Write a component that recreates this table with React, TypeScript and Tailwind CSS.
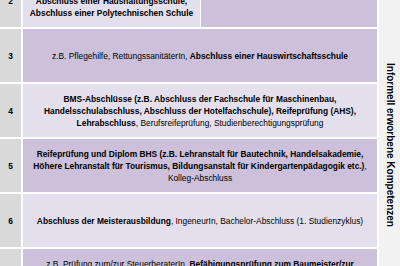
const font = { fontFamily: '"Liberation Sans", Arial, sans-serif' }

export default function App() {
  return (
    <div className="w-[400px] h-[266px] overflow-hidden bg-white" style={font}>
      <div className="flex gap-[2px] mt-[-26px] text-[8.4px] leading-[12px] text-black">
        <div className="flex flex-col gap-[2px] w-[377px]">
          <Row n="2" split>
            <span className="invisible">Abschluss der allgemeinen Schulpflicht,</span>
            <br />
            <b>Abschluss einer Haushaltungsschule,</b>
            <br />
            <b>Abschluss einer Polytechnischen Schule</b>
          </Row>
          <Row n="3" dark>
            z.B. Pflegehilfe, RettungssanitäterIn, <b>Abschluss einer Hauswirtschaftsschule</b>
          </Row>
          <Row n="4">
            <b>BMS-Abschlüsse (z.B. Abschluss der Fachschule für Maschinenbau,</b>
            <br />
            <b>Handelsschulabschluss, Abschluss der Hotelfachschule), Reifeprüfung (AHS),</b>
            <br />
            <b>Lehrabschluss</b>, Berufsreifeprüfung, Studienberechtigungsprüfung
          </Row>
          <Row n="5" dark>
            <b>Reifeprüfung und Diplom BHS (z.B. Lehranstalt für Bautechnik, Handelsakademie,</b>
            <br />
            <b>Höhere Lehranstalt für Tourismus, Bildungsanstalt für Kindergartenpädagogik etc.)</b>,
            <br />
            Kolleg-Abschluss
          </Row>
          <Row n="6">
            <b>Abschluss der Meisterausbildung</b>, IngeneurIn, Bachelor-Abschluss (1. Studienzyklus)
          </Row>
          <Row n="7" dark>
            z.B. Prüfung zum/zur SteuerberaterIn, <b>Befähigungsprüfung zum Baumeister/zur</b>
            <br />
            <b>Baumeisterin</b>, Master-Abschluss (2. Studienzyklus),
            <br />
            Diplom-IngenieurIn
          </Row>
        </div>
        <div className="w-[21px] bg-[#f2f2f2] flex items-center justify-center pt-[14px]">
          <span className="[writing-mode:vertical-rl] font-bold text-[10px] leading-[10px] whitespace-nowrap">
            Informell erworbene Kompetenzen
          </span>
        </div>
      </div>
    </div>
  )
}

function Row({ n, dark, split, children }: { n: string; dark?: boolean; split?: boolean; children: React.ReactNode }) {
  return (
    <div className="flex gap-[2px] h-[53px]">
      <div className="w-[21px] bg-[#d9d9d9] flex items-center justify-center font-bold">{n}</div>
      {split ? (
        <div className="flex-1 flex gap-[1px]">
          <div className="w-[177px] bg-[#e4dfec] flex items-center justify-center text-center">
            <div>{children}</div>
          </div>
          <div className="flex-1 bg-[#ccc0da]" />
        </div>
      ) : (
        <div className={`flex-1 flex items-center justify-center text-center ${dark ? 'bg-[#ccc0da]' : 'bg-[#e4dfec]'}`}>
          <div>{children}</div>
        </div>
      )}
    </div>
  )
}
